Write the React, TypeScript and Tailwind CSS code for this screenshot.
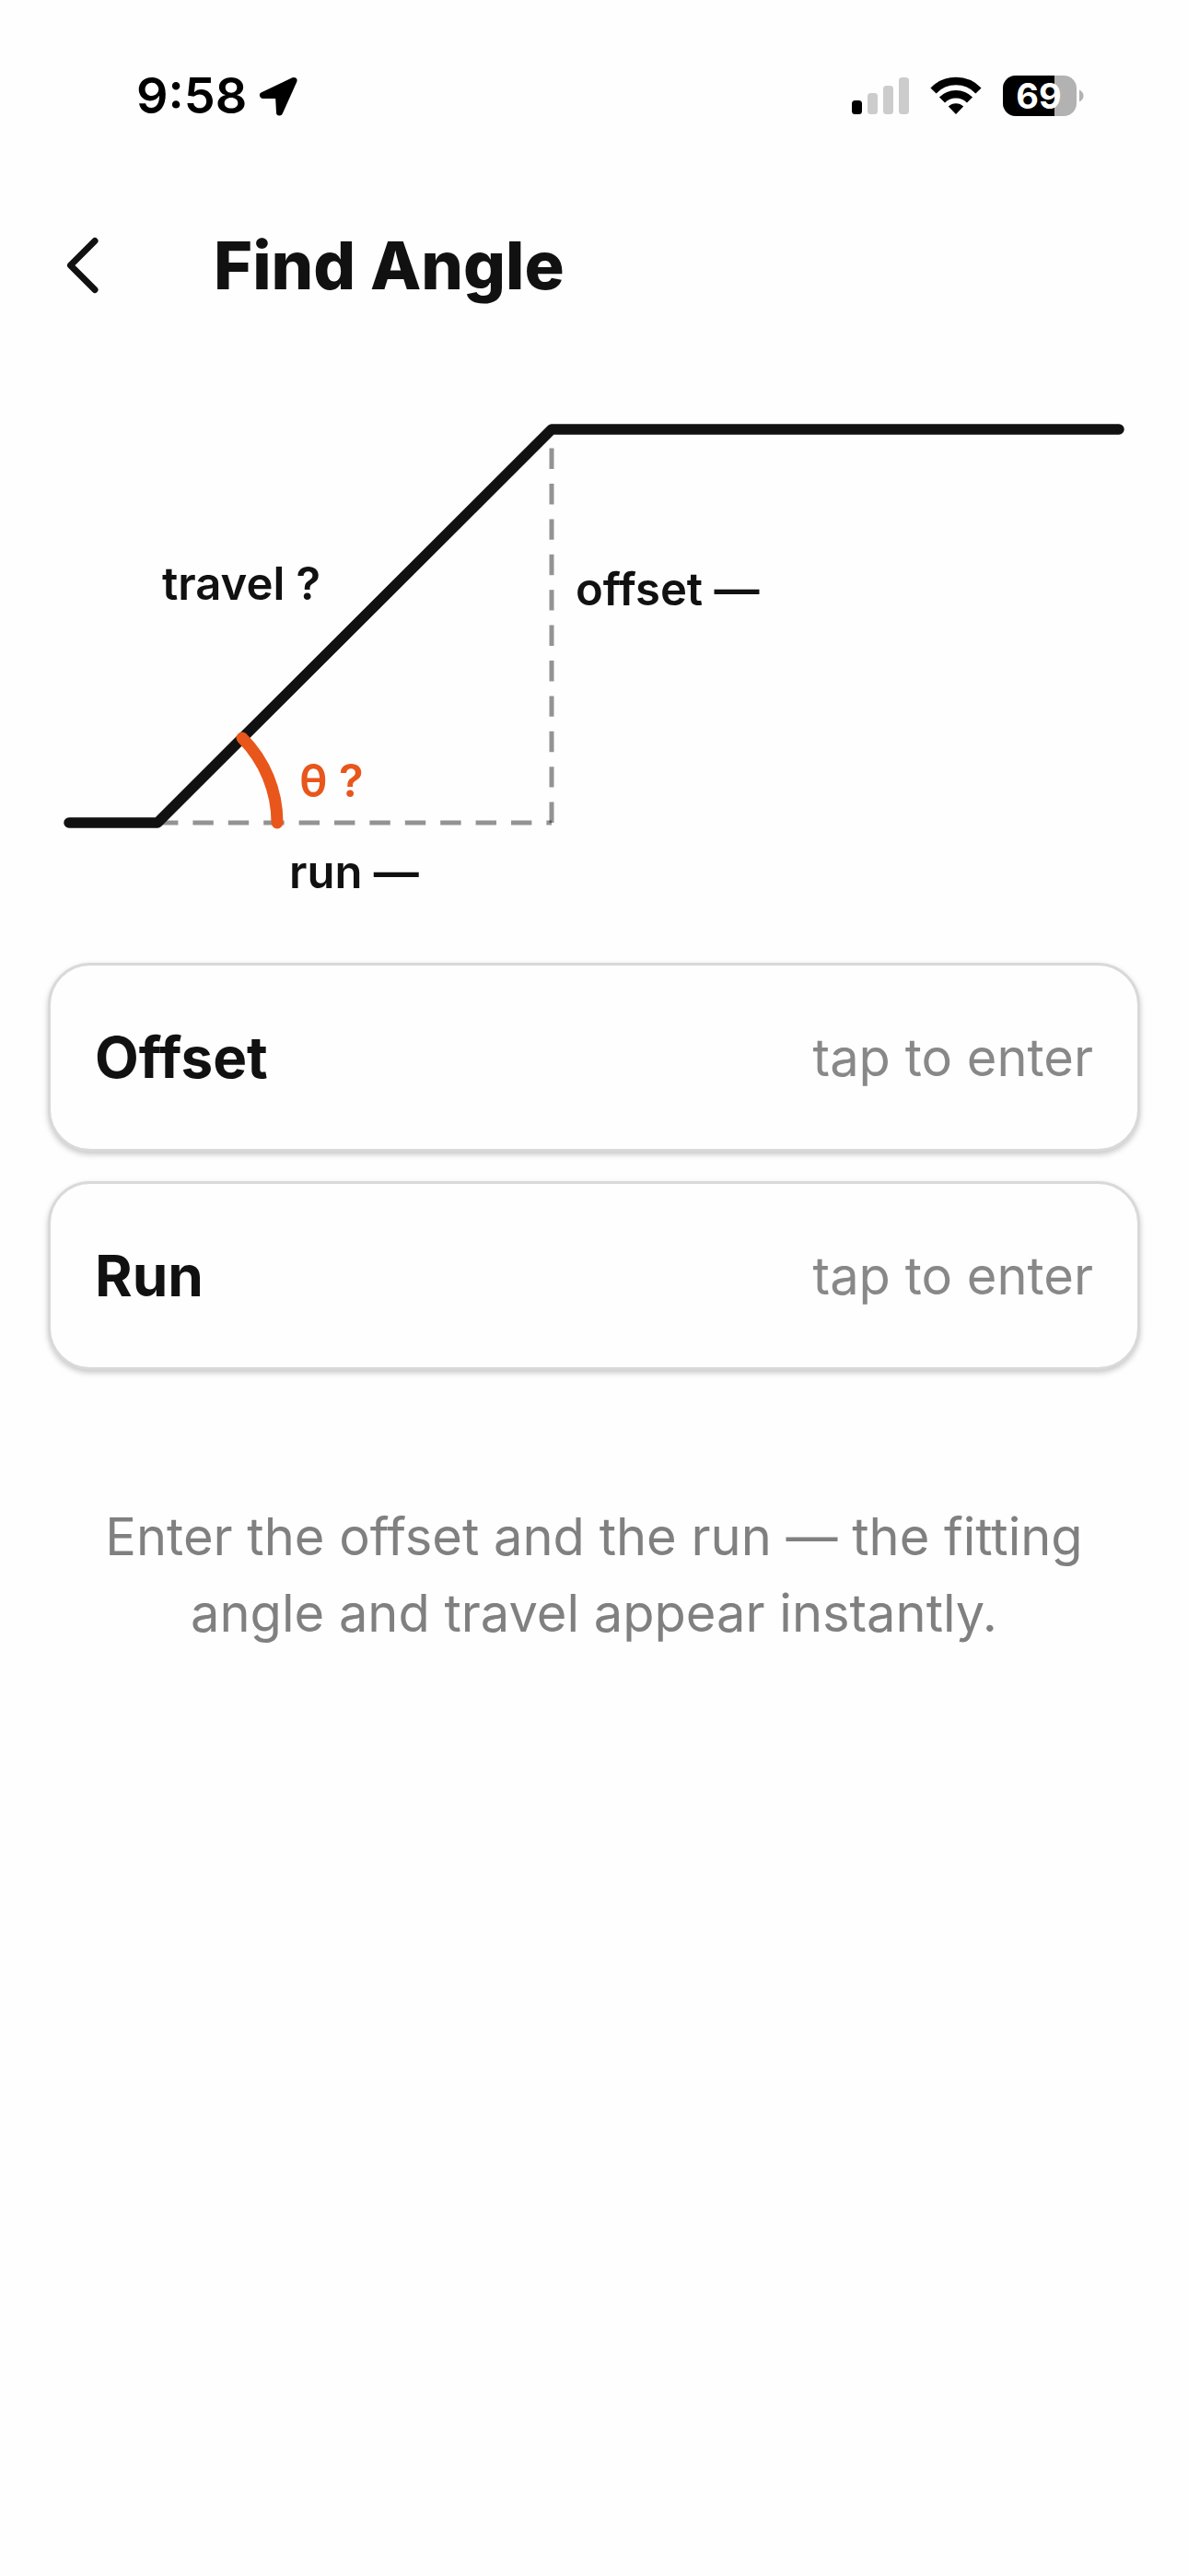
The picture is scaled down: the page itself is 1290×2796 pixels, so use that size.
import { useState } from "react";

const FONT = "font-['Inter','Liberation_Sans',sans-serif]";

function StatusBar() {
  return (
    <div className="flex h-52 items-center justify-between pl-37 pr-28 text-black">
      <div className="flex items-center gap-3">
        <span className="text-[54px] leading-16 font-semibold">9:58</span>
        <svg className="h-11 w-11" viewBox="0 0 44 44" aria-hidden="true">
          <path
            d="M39 5.5 L5.5 21.5 L22.5 21.5 L23.5 40 Z"
            fill="currentColor"
            stroke="currentColor"
            strokeWidth="7"
            strokeLinejoin="round"
          />
        </svg>
      </div>
      <div className="flex items-center gap-[22px]">
        <svg className="h-11 w-16" viewBox="0 0 64 44" aria-hidden="true">
          <rect x="1" y="27" width="11" height="15" rx="3.5" fill="#000" />
          <rect x="18" y="19" width="11" height="23" rx="3.5" fill="#ccc" />
          <rect x="35" y="11" width="11" height="31" rx="3.5" fill="#ccc" />
          <rect x="52" y="2" width="11" height="40" rx="3.5" fill="#ccc" />
        </svg>
        <svg className="h-11 w-14" viewBox="0 0 56 44" aria-hidden="true">
          <path d="M3.5 16.5 A34 34 0 0 1 52.5 16.5" fill="none" stroke="#000" strokeWidth="8.5" />
          <path d="M13 26.5 A21 21 0 0 1 43 26.5" fill="none" stroke="#000" strokeWidth="8.5" />
          <path d="M28 42 L19.8 33.6 A11.5 11.5 0 0 1 36.2 33.6 Z" fill="#000" />
        </svg>
        <svg className="h-11 w-[90px]" viewBox="0 0 90 44" aria-label="Battery 69 percent">
          <defs>
            <clipPath id="battery">
              <rect x="1" width="80" height="44" rx="14" />
            </clipPath>
          </defs>
          <g clipPath="url(#battery)">
            <rect width="82" height="44" fill="#b2b2b2" />
            <rect width="57" height="44" fill="#000" />
          </g>
          <path d="M84 15.5 C90 18 90 26 84 28.5 Z" fill="#b2b2b2" />
          <text x="40" y="36" textAnchor="middle" fontSize="38" fontWeight="700" fill="#fff">
            69
          </text>
        </svg>
      </div>
    </div>
  );
}

function Header() {
  return (
    <header className="flex h-40 items-center gap-10 pl-12">
      <button type="button" aria-label="Back" className="flex h-36 w-36 items-center pl-6">
        <svg className="h-16 w-10" viewBox="0 0 40 64" fill="none" aria-hidden="true">
          <path
            d="M31 5.5 L4.5 32 L31 58.5"
            stroke="#111"
            strokeWidth="7"
            strokeLinecap="round"
            strokeLinejoin="round"
          />
        </svg>
      </button>
      <h1 className="text-[72px] leading-20 font-extrabold">Find Angle</h1>
    </header>
  );
}

function OffsetDiagram() {
  return (
    <svg className="block w-full" viewBox="0 0 1290 616" role="img" aria-label="Offset diagram">
      <g stroke="#111" strokeOpacity="0.45" strokeWidth="5" strokeDasharray="22.4 16">
        <line x1="171" y1="465" x2="599" y2="465" />
        <line x1="599" y1="465" x2="599" y2="38" />
      </g>
      <path
        d="M75 465 H171 L599 38 H1215"
        fill="none"
        stroke="#111"
        strokeWidth="11.5"
        strokeLinecap="round"
        strokeLinejoin="round"
      />
      <path
        d="M301 465 A130 130 0 0 0 263 373"
        fill="none"
        stroke="#e8561b"
        strokeWidth="13"
        strokeLinecap="round"
      />
      <g fontSize="49" fontWeight="600" fill="#111">
        <text x="176" y="223">travel ?</text>
        <text x="625" y="229">offset —</text>
        <text x="325" y="437" fill="#e8561b">θ ?</text>
        <text x="314" y="536">run —</text>
      </g>
    </svg>
  );
}

type FieldProps = {
  id: string;
  label: string;
  value: string;
  onChange: (value: string) => void;
};

function Field({ id, label, value, onChange }: FieldProps) {
  return (
    <div className="flex h-[205px] items-center justify-between rounded-[46px] border-3 border-[#d9d9d9] bg-[#fefefe] px-12 shadow-[0_3px_6px_rgba(0,0,0,0.22)]">
      <label htmlFor={id} className="text-[62px] leading-20 font-bold">
        {label}
      </label>
      <input
        id={id}
        type="text"
        inputMode="decimal"
        placeholder="tap to enter"
        value={value}
        onChange={(e) => onChange(e.target.value)}
        className="min-w-0 flex-1 bg-transparent text-right text-[56px] leading-20 outline-none placeholder:text-[#888]"
      />
    </div>
  );
}

export default function App() {
  const [offset, setOffset] = useState("");
  const [run, setRun] = useState("");

  return (
    <div className={`min-h-screen bg-[#fefefe] text-[#111] ${FONT}`}>
      <StatusBar />
      <Header />
      <main className="pt-15">
        <OffsetDiagram />
        <div className="flex flex-col gap-8 px-13 pt-px">
          <Field id="offset" label="Offset" value={offset} onChange={setOffset} />
          <Field id="run" label="Run" value={run} onChange={setRun} />
        </div>
        <p className="px-20 pt-35 text-center text-[56px] leading-[83px] text-[#808080]">
          Enter the offset and the run — the fitting angle and travel appear instantly.
        </p>
      </main>
    </div>
  );
}
